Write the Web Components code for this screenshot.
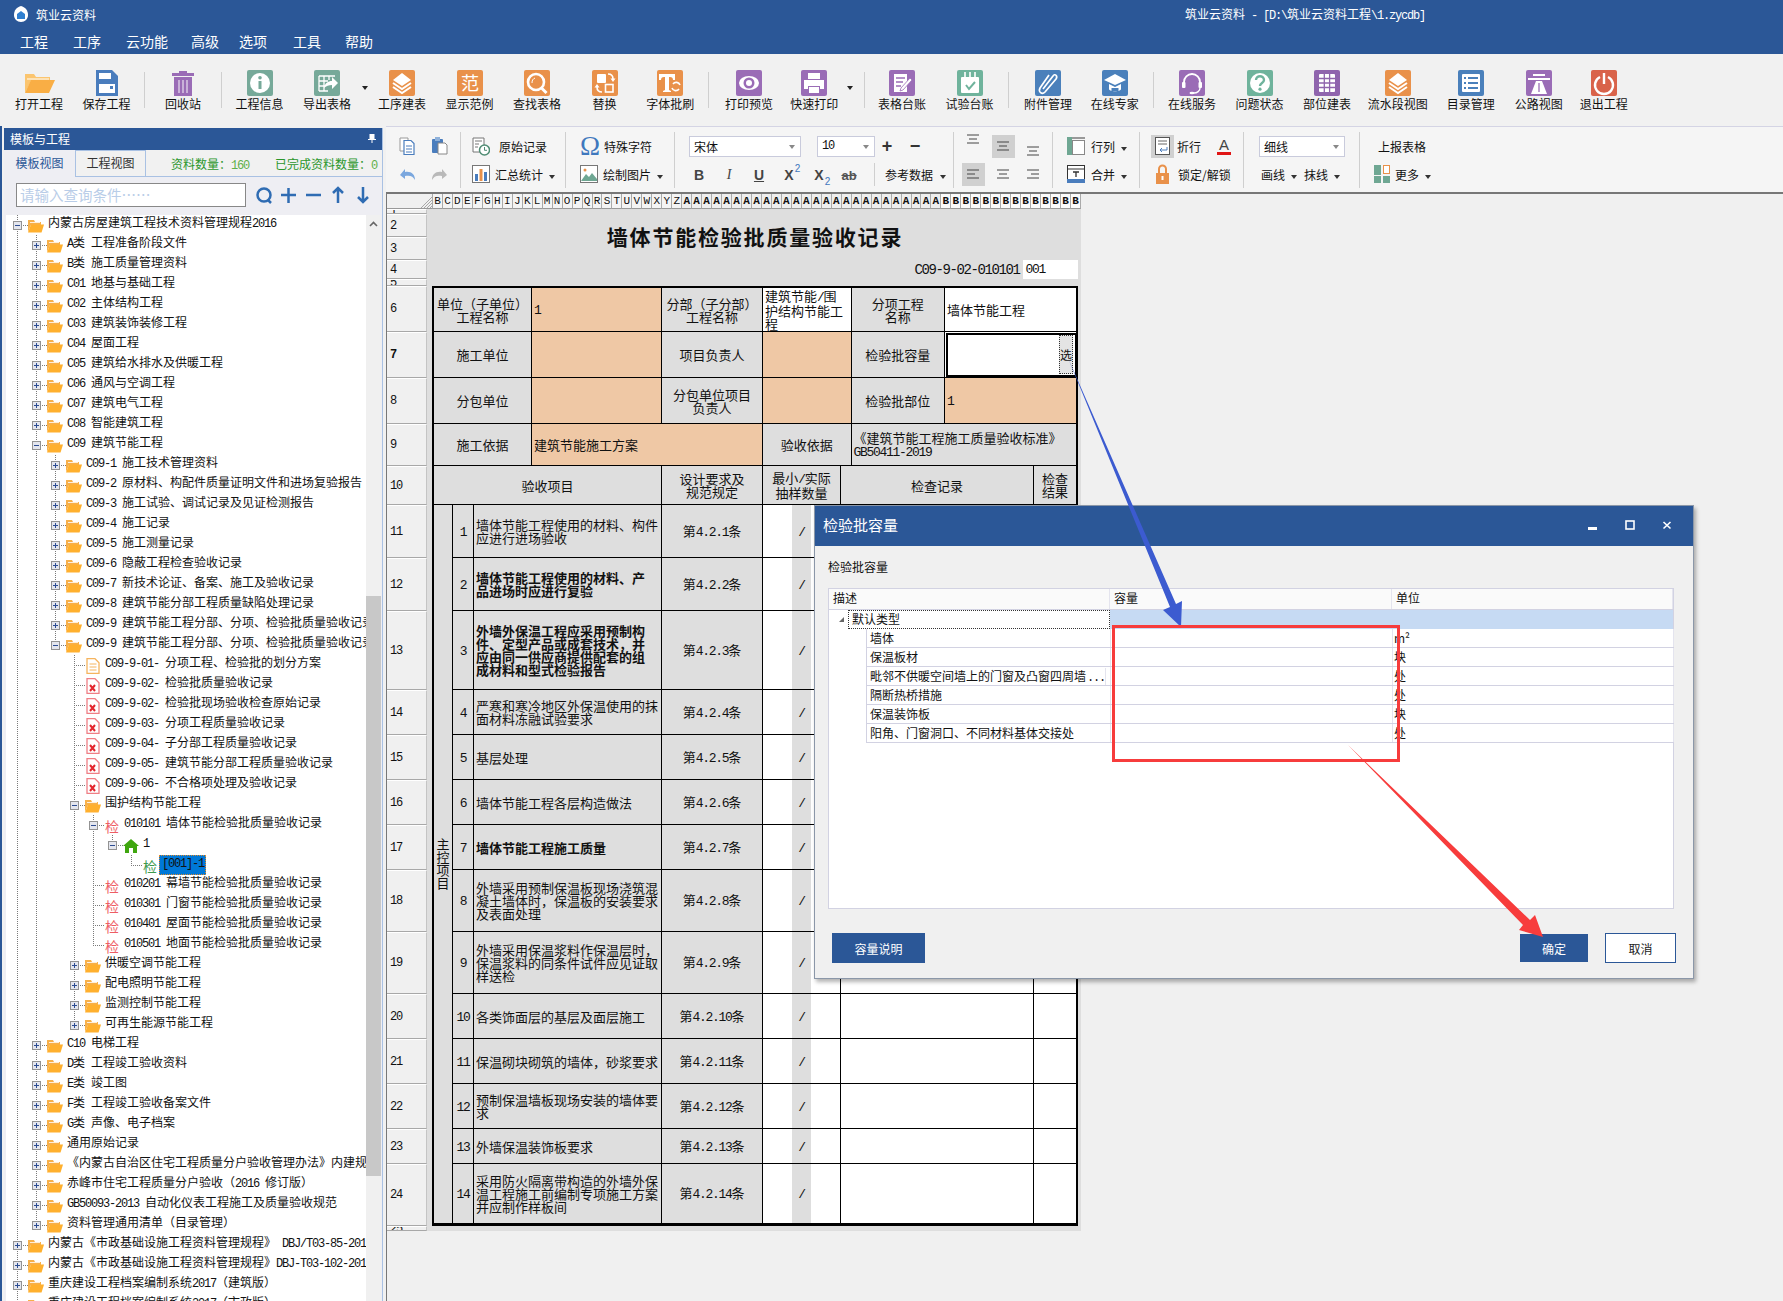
<!DOCTYPE html>
<html lang="zh">
<head>
<meta charset="utf-8">
<title>筑业云资料</title>
<style>
  html,body{margin:0;padding:0;background:#f0f0f0;overflow:hidden}
  body{font-family:"Noto Sans CJK SC","Liberation Sans",sans-serif;font-size:12px;color:#111}
</style>
</head>
<body>
<app-window></app-window>
<script>
const BLUE = "#2b5797";
const BASE = `*{box-sizing:border-box}.l{font-family:"Liberation Mono",monospace;letter-spacing:-.1em}`;
// half width latin like the SimSun of the original
const txt = s => s.replace(/[\x20-\x7e]+/g, m => `<span class="l">${m}</span>`);
const tile = (c, inner) => `<svg width="26" height="26" viewBox="0 0 26 26"><rect width="26" height="26" rx="2" fill="${c}"/>${inner}</svg>`;
const layers = `<path d="M13 3l9 7-9 6-9-6z" fill="#fff"/><path d="M4 13l9 6 9-6M4 17l9 6 9-6" fill="none" stroke="#fff" stroke-width="2"/>`;

class TitleBar extends HTMLElement {
  constructor() { super(); this.attachShadow({ mode: "open" }); }
  connectedCallback() {
    const menu = [["工程",0],["工序",25],["云功能",25],["高级",23],["选项",20],["工具",26],["帮助",24]];
    this.shadowRoot.innerHTML = `<style>${BASE}${TitleBar.styles}</style>
      <div class="top">
        <svg width="14" height="16" viewBox="0 0 14 16"><path d="M7 0C3 1 0 4 0 9c0 4 3 7 7 7s7-3 7-7c0-5-3-8-7-9z" fill="#fff"/><path d="M7 5l4 3v5H3V8z" fill="#2f7fd0"/></svg>
        <span class="app">筑业云资料</span>
        <span class="doc">${txt("筑业云资料 - [D:\\筑业云资料工程\\1.zycdb]")}</span>
      </div>
      <nav>${menu.map(m => `<span style="margin-left:${m[1]}px">${m[0]}</span>`).join("")}</nav>`;
  }
  static get styles() {
    return `:host{display:block;height:54px;background:${BLUE};color:#fff}
      .top{height:28px;display:flex;align-items:center;padding-left:14px}
      .app{margin-left:8px}
      .doc{margin-left:1089px}
      nav{display:flex;padding-left:20px;margin-top:1px;font-size:14px;line-height:24px}`;
  }
}
customElements.define("title-bar", TitleBar);

class RibbonBtn extends HTMLElement {
  constructor() { super(); this.attachShadow({ mode: "open" }); }
  connectedCallback() {
    this.style.width = (this.getAttribute("w") || 67.5) + "px";
    this.shadowRoot.innerHTML = `<style>${BASE}
      :host{display:flex;flex-direction:column;align-items:center;flex:none}
      .ic{height:26px;display:flex;align-items:center}
      .lb{margin-top:2px;line-height:12px;white-space:nowrap}
    </style><div class="ic"><slot></slot></div><div class="lb">${this.getAttribute("label")}</div>`;
  }
}
customElements.define("ribbon-btn", RibbonBtn);

class AppRibbon extends HTMLElement {
  constructor() { super(); this.attachShadow({ mode: "open" }); }
  connectedCallback() {
    const G = "#76a999", O = "#e9914a", P = "#9a6cb6", B = "#4a80bb", T = "#6fb39c";
    const sep = w => `<i class="sep" style="width:${w}px"></i>`;
    const dd = w => `<i class="dd" style="width:${w}px"></i>`;
    const btn = (label, icon, w) => `<ribbon-btn label="${label}"${w ? ` w="${w}"` : ""}>${icon}</ribbon-btn>`;
    this.shadowRoot.innerHTML = `<style>${BASE}${AppRibbon.styles}</style>
      ${btn("打开工程", `<svg width="31" height="22" viewBox="0 0 31 22"><path d="M1 21V2h9l2 3h14v4H7z" fill="#fbc56f"/><path d="M3 7h22" stroke="#fff" stroke-width="1"/><path d="M1 21 7 8h24l-6 13z" fill="#f9ae45"/></svg>`)}
      ${btn("保存工程", `<svg width="24" height="26" viewBox="0 0 24 26"><path d="M1 0h16l6 6v20H1z" fill="#4a7dbd"/><rect x="4" y="3" width="12" height="6" fill="#fff" /><rect x="4" y="14" width="16" height="9" fill="#fff"/><rect x="15" y="16" width="3" height="3" fill="#4a7dbd"/></svg>`)}
      ${sep(9)}
      ${btn("回收站", `<svg width="26" height="26" viewBox="0 0 26 26"><path d="M9 3V1h8v2h7v3H2V3z" fill="#9a6cb6"/><path d="M4 7h18v19H4z" fill="#9a6cb6"/><path d="M9 10v13M13 10v13M17 10v13" stroke="#d9c7e4" stroke-width="1.5"/></svg>`)}
      ${sep(9)}
      ${btn("工程信息", tile(G, `<circle cx="13" cy="13" r="10" fill="#fff"/><rect x="11.5" y="11" width="3" height="8" fill="${G}"/><circle cx="13" cy="7.8" r="1.8" fill="${G}"/>`))}
      ${btn("导出表格", tile(G, `<path d="M5 6h16M5 11h9M5 16h6M5 21h9M5 6v15M10 6v15M15 6v4" stroke="#fff" stroke-width="1.3" fill="none"/><path d="M10 18c1-5 4-7 8-7V7l6 6-6 6v-4c-3 0-6 1-8 3z" fill="#fff"/>`))}
      ${dd(7.5)}
      ${btn("工序建表", tile(O, layers))}
      ${btn("显示范例", tile(O, `<text x="13" y="20" text-anchor="middle" font-size="18" fill="#fff">范</text>`))}
      ${btn("查找表格", tile(O, `<circle cx="12" cy="12" r="8" fill="none" stroke="#fff" stroke-width="2.6"/><path d="M17.5 18l5 5" stroke="#fff" stroke-width="3"/><path d="M8 13c0-3 1-4 3-5" stroke="#fff" fill="none"/>`))}
      ${btn("替换", tile(O, `<rect x="5" y="4" width="9" height="9" rx="1" fill="#fff"/><rect x="13.5" y="14.5" width="7.5" height="7.5" fill="none" stroke="#fff" stroke-width="1.6"/><path d="M16 4c3 0 5 2 5 5M10 22c-3 0-5-2-5-5" fill="none" stroke="#fff" stroke-width="1.6"/><path d="M18.5 8.5h5L21 12zM2.5 17.5h5L5 14z" fill="#fff"/>`))}
      ${btn("字体批刷", tile(O, `<path d="M2 4h16v6h-2c0-2-1-3-3-3h-1v13l2 1v1H6v-1l2-1V7H7c-2 0-3 1-3 3H2z" fill="#fff"/><path d="M23 15a4 4 0 0 0-7-1M15 18a4 4 0 0 0 7 1" fill="none" stroke="#fff" stroke-width="1.6"/>`), 64)}
      ${sep(13)}
      ${btn("打印预览", tile(P, `<ellipse cx="13" cy="13" rx="10" ry="7" fill="#fff"/><circle cx="13" cy="13" r="5.5" fill="${P}"/><circle cx="13" cy="13" r="3" fill="#fff"/>`))}
      ${btn("快速打印", tile(P, `<rect x="7" y="3" width="12" height="6" fill="#fff"/><path d="M3 10h20v9h-4v-3H7v3H3z" fill="#fff"/><rect x="8" y="17" width="10" height="6" fill="#fff"/>`), 63)}
      ${dd(15)}${sep(7.5)}
      ${btn("表格台账", tile(P, `<path d="M5 4h13v18H5z" fill="#fff"/><path d="M7 8h9M7 12h7M7 16h5" stroke="${P}" stroke-width="1.4"/><path d="M12 18l9-10 2 2-9 10-3 1z" fill="#fff" stroke="${P}" stroke-width=".8"/>`))}
      ${btn("试验台账", tile(T, `<rect x="4" y="7" width="18" height="16" rx="1" fill="#fff"/><path d="M8 2v9M13 2v9M18 2v9" stroke="#fff" stroke-width="1.6"/><path d="M9 15l3 4 6-7" fill="none" stroke="${T}" stroke-width="2"/>`))}
      ${sep(11)}
      ${btn("附件管理", tile(B, `<path d="M9 20 19 7c2-3 5 0 3 3L11 23c-3 3-7 0-5-4L15 6" transform="translate(-1 -1)" fill="none" stroke="#fff" stroke-width="1.7"/>`))}
      ${btn("在线专家", tile(B, `<path d="M13 4l11 6-11 5-11-5z" fill="#fff"/><path d="M7 14v5c0 3 12 3 12 0v-5l-6 3z" fill="#fff"/><rect x="9.5" y="18" width="7" height="3" fill="${B}"/>`), 66)}
      ${sep(10.5)}
      ${btn("在线服务", tile(P, `<path d="M5 15v-3a8 8 0 0 1 16 0v3" fill="none" stroke="#fff" stroke-width="1.8"/><rect x="3" y="12" width="3.5" height="6" rx="1" fill="#fff"/><rect x="19.5" y="12" width="3.5" height="6" rx="1" fill="#fff"/><path d="M21 18c0 3-3 5-6 5" fill="none" stroke="#fff" stroke-width="1.4"/><ellipse cx="13" cy="23" rx="2.5" ry="1.3" fill="#fff"/>`))}
      ${btn("问题状态", tile(T, `<circle cx="13" cy="13" r="10" fill="#fff"/><path d="M9 10c0-5 8-5 8 0 0 3-4 3-4 6" fill="none" stroke="${T}" stroke-width="2.4"/><circle cx="13" cy="19.2" r="1.6" fill="${T}"/>`))}
      ${btn("部位建表", tile("#8f64ad", `<rect x="5" y="4" width="16" height="18" rx="1" fill="#fff"/><path d="M5 8.5h16M5 13h16M5 17.500h16M10.300 4v18M15.600 4v18" stroke="#8f64ad" stroke-width="1.300"/>`))}
      ${btn("流水段视图", tile(O, layers), 74)}
      ${btn("目录管理", tile(B, `<rect x="4" y="4" width="18" height="18" rx="1" fill="#fff"/><path d="M10 8h10M10 13h10M10 18h10M6 8h2M6 13h2M6 18h2" stroke="${B}" stroke-width="1.800"/>`), 72)}
      ${btn("公路视图", tile(P, `<path d="M2 8h22v2H2zM7 4h12v2H7z" fill="#fff"/><path d="M10 11h6l5 13H5z" fill="#fff"/><path d="M13 13v9" stroke="${P}" stroke-width="1.300"/>`), 64)}
      ${btn("退出工程", tile("#d9634a", `<path d="M9 7a9 9 0 1 0 8 0" fill="none" stroke="#fff" stroke-width="2.400"/><path d="M13 3v11" stroke="#fff" stroke-width="2.400"/>`), 66)}`;
  }
  static get styles() {
    return `:host{display:flex;height:72px;padding:16px 0 0 5.25px;background:#f1f1f1;align-items:flex-start}
      .sep{flex:none;height:36px;margin-top:2px;position:relative;background:linear-gradient(#cfcfcf,#cfcfcf) center/1px 100% no-repeat}
      .dd{flex:none;height:34px;background:linear-gradient(#f1f1f1,#f1f1f1);position:relative}
      .dd::after{content:"";position:absolute;left:1px;top:16px;border:3px solid transparent;border-top:4px solid #222}`;
  }
}
customElements.define("app-ribbon", AppRibbon);

class ProjectTree extends HTMLElement {
  constructor() { super(); this.attachShadow({ mode: "open" }); }
  static get rows() {
    // level | kind (o open, c closed, d doc, x red doc, ...) | text
    return `0|o|内蒙古房屋建筑工程技术资料管理规程2016
1|c|A类 工程准备阶段文件
1|c|B类 施工质量管理资料
1|c|C01 地基与基础工程
1|c|C02 主体结构工程
1|c|C03 建筑装饰装修工程
1|c|C04 屋面工程
1|c|C05 建筑给水排水及供暖工程
1|c|C06 通风与空调工程
1|c|C07 建筑电气工程
1|c|C08 智能建筑工程
1|o|C09 建筑节能工程
2|c|C09-1 施工技术管理资料
2|c|C09-2 原材料、构配件质量证明文件和进场复验报告
2|c|C09-3 施工试验、调试记录及见证检测报告
2|c|C09-4 施工记录
2|c|C09-5 施工测量记录
2|c|C09-6 隐蔽工程检查验收记录
2|c|C09-7 新技术论证、备案、施工及验收记录
2|c|C09-8 建筑节能分部工程质量缺陷处理记录
2|c|C09-9 建筑节能工程分部、分项、检验批质量验收记录
2|o|C09-9 建筑节能工程分部、分项、检验批质量验收记录
3|d|C09-9-01- 分项工程、检验批的划分方案
3|x|C09-9-02- 检验批质量验收记录
3|x|C09-9-02- 检验批现场验收检查原始记录
3|x|C09-9-03- 分项工程质量验收记录
3|x|C09-9-04- 子分部工程质量验收记录
3|x|C09-9-05- 建筑节能分部工程质量验收记录
3|x|C09-9-06- 不合格项处理及验收记录
3|o|围护结构节能工程
4|jo|010101 墙体节能检验批质量验收记录
5|h|1
6|g|[001]-1
4|j|010201 幕墙节能检验批质量验收记录
4|j|010301 门窗节能检验批质量验收记录
4|j|010401 屋面节能检验批质量验收记录
4|j|010501 地面节能检验批质量验收记录
3|c|供暖空调节能工程
3|c|配电照明节能工程
3|c|监测控制节能工程
3|c|可再生能源节能工程
1|c|C10 电梯工程
1|c|D类 工程竣工验收资料
1|c|E类 竣工图
1|c|F类 工程竣工验收备案文件
1|c|G类 声像、电子档案
1|c|通用原始记录
1|c|《内蒙古自治区住宅工程质量分户验收管理办法》内建规
1|c|赤峰市住宅工程质量分户验收（2016 修订版）
1|c|GB50093-2013 自动化仪表工程施工及质量验收规范
1|c|资料管理通用清单（目录管理）
0|c|内蒙古《市政基础设施工程资料管理规程》 DBJ/T03-85-201
0|c|内蒙古《市政基础设施工程资料管理规程》DBJ-T03-102-201
0|c|重庆建设工程档案编制系统2017（建筑版）
0|c|重庆建设工程档案编制系统2017（市政版）`.split("\n").map(r => { const p = r.split("|"); return { lv: +p[0], k: p[1], t: p[2] }; });
  }
  connectedCallback() {
    const rows = ProjectTree.rows;
    const folder = `<svg width="16" height="14" viewBox="0 0 16 14"><path d="M0 13V1h6l1 2h6v3H3z" fill="#f7b04a"/><path d="M2 3.500h10" stroke="#fff" stroke-width=".8"/><path d="M0 13.500 3 5.500h13l-2.500 8z" fill="#ffb02e"/></svg>`;
    const page = c => `<svg width="14" height="16" viewBox="0 0 14 16"><path d="M1 .7h8l4 4V15.300H1z" fill="#fff" stroke="${c}" stroke-width="1.300"/>`;
    const icons = {
      o: folder, c: folder,
      d: page("#f5b45e") + `<path d="M3.500 6h7M3.500 9h7M3.500 12h7" stroke="#f5b45e"/></svg>`,
      x: page("#ef7f86") + `<path d="M4 7l5 6M9 7l-5 6" stroke="#e3272f" stroke-width="2"/></svg>`,
      h: `<svg width="16" height="14" viewBox="0 0 16 14"><path d="M8 0l8 7h-2v7h-4V9H6v5H2V7H0z" fill="#3fa60f"/></svg>`
    };
    const nextSame = (i, l) => { // is there a later row at level l under the same parent?
      for (let j = i + 1; j < rows.length; j++) {
        if (rows[j].lv < l) return false;
        if (rows[j].lv === l) return true;
      }
      return false;
    };
    const dotV = `repeating-linear-gradient(to bottom,#7a7a7a 0 1px,transparent 1px 2px)`;
    const dotH = `repeating-linear-gradient(to right,#7a7a7a 0 1px,transparent 1px 2px)`;
    const html = rows.map((r, i) => {
      const bg = [];
      for (let l = 0; l < r.lv; l++) if (nextSame(i, l)) bg.push(`${dotV} ${11 + 19 * l}px 0/1px 100% no-repeat`);
      const x = 11 + 19 * r.lv;
      bg.push(nextSame(i, r.lv) ? `${dotV} ${x}px 0/1px 100% no-repeat` : `${dotV} ${x}px 0/1px 10px no-repeat`);
      bg.push(`${dotH} ${x}px 10px/11px 1px no-repeat`);
      const hasBox = "oc".includes(r.k) || r.k === "jo" || r.k === "h";
      const open = r.k === "o" || r.k === "jo" || r.k === "h";
      let ic;
      if (r.k === "j" || r.k === "jo") ic = `<b class="jian">检</b>`;
      else if (r.k === "g") ic = `<b class="jian g">检</b>`;
      else ic = icons[r.k];
      const label = r.k === "g" ? `<span class="t sel">${txt(r.t)}</span>` : `<span class="t">${txt(r.t)}</span>`;
      return `<div class="row" style="padding-left:${7 + 19 * r.lv}px;background:${bg.join(",")}">
        <i class="box ${hasBox ? (open ? "minus" : "plus") : "none"}"></i><span class="ic">${ic}</span>${label}</div>`;
    }).join("");
    this.shadowRoot.innerHTML = `<style>${BASE}${ProjectTree.styles}</style>${html}`;
  }
  static get styles() {
    return `:host{display:block;background:#fff;overflow:hidden;flex:1;min-width:0;height:100%}
      .row{height:20px;display:flex;align-items:center;white-space:nowrap}
      .box{flex:none;width:9px;height:9px;margin-right:6px;border:1px solid #939393;background:#e4e6ee;position:relative}
      .box.none{visibility:hidden}
      .box::before{content:"";position:absolute;left:1px;top:3px;width:5px;height:1px;background:#2c4c92}
      .box.plus::after{content:"";position:absolute;left:3px;top:1px;width:1px;height:5px;background:#2c4c92}
      .ic{flex:none;width:16px;height:16px;display:flex;align-items:center;justify-content:center;margin-top:1px;background:#fff}
      .jian{font-weight:400;font-size:14px;line-height:16px;color:#ee5d63}
      .jian.g{color:#3c9a4c}
      .t{margin:1px 0 0 4px;line-height:12px;align-self:flex-start}
      .t.sel{margin:0 0 0 1px;align-self:stretch;width:47px;background:#0078d7;outline:1px dotted #e08a2c;outline-offset:-1px;padding-left:3px;padding-top:1px}`;
  }
}
customElements.define("project-tree", ProjectTree);

class SidePanel extends HTMLElement {
  constructor() { super(); this.attachShadow({ mode: "open" }); }
  connectedCallback() {
    const c = "#2f6cb3";
    this.shadowRoot.innerHTML = `<style>${BASE}${SidePanel.styles}</style>
      <header><span>模板与工程</span>
        <svg width="8" height="9" viewBox="0 0 8 9"><path d="M1.500 0h5v5h1.500v1H4.500v3h-1V6H0V5h1.500z" fill="#fff"/></svg></header>
      <div class="tabs">
        <span class="tab on">模板视图</span><span class="tab">工程视图</span>
        <span class="st s1">资料数量：<em>${txt("160")}</em></span>
        <span class="st s2">已完成资料数量：<em>${txt("0")}</em></span>
      </div>
      <div class="search">
        <div class="box">请输入查询条件……</div>
        <svg width="126" height="20" viewBox="0 0 126 20" fill="none" stroke="${c}" stroke-width="2.500">
          <circle cx="9" cy="10" r="6.500"/><path d="M13 15l3 3"/>
          <path d="M26 10h15M33.500 3v15M51 10h15"/>
          <path d="M83 18V3M78 8l5-5 5 5M108 2v15M103 12l5 5 5-5"/>
        </svg>
      </div>
      <div class="body">
        <project-tree></project-tree>
        <div class="scroll">
          <svg class="up" width="9" height="6" viewBox="0 0 9 6"><path d="M1 5l3.500-3.500L8 5" fill="none" stroke="#666" stroke-width="1.600"/></svg>
          <div class="thumb"></div>
        </div>
      </div>`;
  }
  static get styles() {
    return `:host{display:flex;flex-direction:column;width:379px;margin:2px 0 0 2px;flex:none;height:1173px;background:#eeeef3;border-right:1px solid #a9c1e3}
      header{height:22px;background:${BLUE};color:#fff;display:flex;align-items:center;justify-content:space-between;padding:0 6px 2px 6px;flex:none}
      .tabs{height:27px;flex:none;display:flex;background:#f1f1f1;border-bottom:1px solid #a9c1e3;align-items:stretch;position:relative}
      .tab{width:71px;display:flex;align-items:center;justify-content:center;padding-bottom:3px;border:1px solid #a9c1e3;border-bottom:0;color:#333}
      .tab.on{color:${BLUE};width:71px;background:#eeeef3;border:0;margin-bottom:-1px;border-right:0}
      .st{color:#2b962b;align-self:center;padding-top:2px;white-space:nowrap}
      .st em{font-style:normal;color:#5fb04a}
      .s1{margin-left:25px}.s2{margin-left:26px}
      .search{height:38px;flex:none;display:flex;align-items:center;padding:0 0 2px 12px}
      .box{width:230px;height:24px;background:#fff;border:1px solid #888;color:#b9cde8;font-size:14.500px;line-height:22px;padding-left:3px;margin-right:9px;white-space:nowrap}
      .body{flex:1;display:flex;min-height:0;padding-left:2px}
      project-tree{width:360px;flex:none}
      .scroll{width:15px;flex:none;background:#f0f0f0;position:relative;padding-top:381px}
      .up{position:absolute;left:3px;top:6px}
      .thumb{height:580px;background:#c8c8c8}`;
  }
}
customElements.define("side-panel", SidePanel);

class EditToolbar extends HTMLElement {
  constructor() { super(); this.attachShadow({ mode: "open" }); }
  connectedCallback() {
    const dd = `<i class="dd"></i>`;
    const sel = (t, w) => `<span class="sel" style="width:${w}px">${txt(t)}<i></i></span>`;
    const al = (k, cls, dy) => {
      const a = { c: "M1 1h12M3 5h8M1 9h12", l: "M1 1h12M1 5h8M1 9h12", r: "M1 1h12M5 5h8M1 9h12" }[k];
      return `<span class="ab ${cls || ""}"><svg width="14" height="10" viewBox="0 0 14 10" style="transform:translateY(${dy || 0}px)"><path d="${a}" stroke="#444" fill="none"/></svg></span>`;
    };
    const s = (w, h, inner) => `<svg width="${w}" height="${h}" viewBox="0 0 ${w} ${h}">${inner}</svg>`;
    this.shadowRoot.innerHTML = `<style>${BASE}${EditToolbar.styles}</style>
    <div class="g" style="width:75px;padding-left:13px">
      <div class="r" style="gap:15px">
        ${s(17, 18, `<path d="M1 1h8v13H1z" fill="#fff" stroke="#999"/><path d="M5 3.500h7l3 3v11H5z" fill="#fff" stroke="#4a7dbd" stroke-width="1.200"/><path d="M7 9h6M7 12h6M7 15h6" stroke="#4a7dbd"/>`)}
        ${s(17, 18, `<rect x="1" y="2" width="11" height="14" rx="1" fill="#4a7dbd"/><rect x="4" y="0" width="5" height="4" fill="#8fb1da"/><path d="M7 6h7l2 2v9H7z" fill="#fff" stroke="#888"/>`)}
      </div>
      <div class="r" style="gap:15px">
        ${s(17, 14, `<path d="M1 8l5-6v3c6-1 10 2 10 8-2-4-5-5-10-4v3z" fill="#7aa7de"/>`)}
        ${s(17, 14, `<path d="M16 8l-5-6v3C5 4 1 7 1 13c2-4 5-5 10-4v3z" fill="#b9b9b9"/>`)}
      </div>
    </div>
    <div class="g" style="width:105px;padding-left:11px">
      <div class="r">${s(18, 19, `<path d="M1 1h11v14H1z" fill="#fff" stroke="#777"/><path d="M3 4h7M3 7h4M3 10h3" stroke="#777"/><circle cx="12.500" cy="13" r="5" fill="#fff" stroke="#4f8c73" stroke-width="1.500"/><path d="M12.500 10v3.300h2.500" stroke="#4f8c73" fill="none"/>`)}<span style="margin-left:9px">原始记录</span></div>
      <div class="r">${s(18, 18, `<rect x=".5" y=".5" width="17" height="17" fill="#fff" stroke="#777"/><rect x="3" y="9" width="3" height="7" fill="#4a7dbd"/><rect x="7.500" y="4" width="3" height="12" fill="#e9914a"/><rect x="12" y="7" width="3" height="9" fill="#4a7dbd"/>`)}<span style="margin-left:5px">汇总统计</span><span style="margin-left:6px">${dd}</span></div>
    </div>
    <div class="g" style="width:109px;padding-left:14px">
      <div class="r"><span class="om">Ω</span><span style="margin-left:6px">特殊字符</span></div>
      <div class="r">${s(18, 18, `<rect x=".5" y=".5" width="17" height="17" fill="#fff" stroke="#777"/><path d="M1 16l5-7 3 3 3-4 5 6v2H1z" fill="#6fa793"/><circle cx="5" cy="5" r="1.500" fill="#e9914a"/>`)}<span style="margin-left:5px">绘制图片</span><span style="margin-left:6px">${dd}</span></div>
    </div>
    <div class="g" style="width:279px;padding-left:14px">
      <div class="r">${sel("宋体", 112)}<span style="margin-left:16px">${sel("10", 58)}</span>
        <b class="pm" style="margin-left:5px">+</b><b class="pm" style="margin-left:14px">−</b></div>
      <div class="r" style="margin-left:-5px">
        <span class="f"><b style="font-family:'Liberation Sans';font-size:14px">B</b></span>
        <span class="f"><i style="font-family:'Liberation Serif';font-size:14px">I</i></span>
        <span class="f"><u style="font-family:'Liberation Sans';font-weight:700;font-size:14px">U</u></span>
        <span class="f"><b style="font-family:'Liberation Sans';font-size:14px">X</b><sup>2</sup></span>
        <span class="f"><b style="font-family:'Liberation Sans';font-size:14px">X</b><sub>2</sub></span>
        <span class="f"><s style="font-family:'Liberation Sans';font-size:13px;font-weight:700;color:#555">ab</s></span>
        <i class="mini" style="margin-left:10px"></i><span style="margin-left:10px;white-space:nowrap">参考数据</span><span style="margin-left:7px">${dd}</span>
      </div>
    </div>
    <div class="g" style="width:99px;padding-left:4px">
      <div class="r">${al("c", "", -7)}${al("c", "on", 0)}${al("c", "", 5)}</div>
      <div class="r">${al("l", "on")}${al("c")}${al("r")}</div>
    </div>
    <div class="g" style="width:87px;padding-left:14px">
      <div class="r">${s(18, 18, `<rect x="0" y="0" width="18" height="2" fill="#999"/><rect x="0" y="0" width="5" height="18" fill="#6fa793"/><rect x="5.500" y="3.500" width="12" height="14" fill="#fff" stroke="#888"/>`)}<span style="margin-left:6px">行列</span><span style="margin-left:6px">${dd}</span></div>
      <div class="r">${s(18, 18, `<rect x=".5" y=".5" width="17" height="17" fill="#fff" stroke="#333"/><rect x="0" y="14" width="18" height="4" fill="#4a7dbd"/><path d="M0 4h18" stroke="#333"/><path d="M6 7h6M9 7v5" stroke="#333" stroke-width="1.300"/>`)}<span style="margin-left:6px">合并</span><span style="margin-left:6px">${dd}</span></div>
    </div>
    <div class="g" style="width:104px;padding-left:11px">
      <div class="r"><span class="ab on" style="width:23px;margin-left:0">${s(15, 18, `<rect x=".5" y=".5" width="14" height="17" fill="#fff" stroke="#555"/><path d="M3 4h9M3 7h9" stroke="#666"/><path d="M12 10v3H5M7 11l-2 2 2 2" fill="none" stroke="#4a7dbd"/>`)}</span><span style="margin-left:3px">折行</span>
        <span class="a">A</span></div>
      <div class="r">${s(23, 20, `<path d="M8 9V5a3.500 3.500 0 0 1 7 0v4" fill="none" stroke="#e9914a" stroke-width="2"/><rect x="5" y="9" width="13" height="11" fill="#e9914a"/><rect x="10.500" y="12" width="2" height="4" fill="#fff"/>`)}<span style="margin-left:4px;white-space:nowrap">锁定/解锁</span></div>
    </div>
    <div class="g" style="width:116px;padding-left:15px">
      <div class="r">${sel("细线", 86)}</div>
      <div class="r"><span style="margin-left:2px">画线</span><span style="margin-left:6px">${dd}</span><span style="margin-left:7px">抹线</span><span style="margin-left:6px">${dd}</span></div>
    </div>
    <div class="g" style="border:0;padding-left:14px">
      <div class="r"><span style="margin-left:4px">上报表格</span></div>
      <div class="r">${s(16, 18, `<rect x="0" y="0" width="7" height="10" fill="#6fa793"/><rect x="9.500" y=".5" width="6" height="8" fill="#fff" stroke="#e9914a"/><rect x="0" y="11" width="7" height="7" fill="#6fa793"/><rect x="9" y="11" width="7" height="7" fill="#6fa793"/>`)}<span style="margin-left:5px">更多</span><span style="margin-left:6px">${dd}</span></div>
    </div>`;
  }
  static get styles() {
    return `:host{display:flex;height:68px;padding-top:5px;background:#f5f5f5;border-top:1px solid #d4d4e4;border-bottom:2px solid #777;flex:none}
      .g{height:56px;flex:none;border-right:1px solid #cfcfcf}
      .r{height:28px;display:flex;align-items:center;white-space:nowrap}
      .dd{display:inline-block;border:3px solid transparent;border-top:4px solid #333;vertical-align:-2px}
      .om{font-family:"Liberation Serif",serif;font-size:27px;line-height:26px;color:#3f78bd;width:18px;text-align:center}
      .sel{display:flex;align-items:center;height:21px;background:#fff;border:1px solid #c9cbdc;padding-left:4px;position:relative;flex:none}
      .sel i{position:absolute;right:5px;top:8px;border:3.500px solid transparent;border-top:4px solid #888}
      .pm{width:14px;text-align:center;font:700 18px/20px "Liberation Sans",sans-serif;color:#333}
      .f{width:30px;text-align:center;color:#444;flex:none;position:relative}
      .f sup,.f sub{font:10px "Liberation Sans",sans-serif;color:#3f78bd;position:absolute;margin-left:1px}
      .f sup{top:-3px}.f sub{bottom:-4px}
      .mini{width:1px;height:23px;background:#cfcfcf;flex:none}
      .ab{width:30px;height:23px;flex:none;display:flex;align-items:center;justify-content:center}
      .ab.on{background:linear-gradient(#d0d0d0,#d0d0d0) center/23px 23px no-repeat}
      .a{margin-left:16px;width:14px;text-align:center;font:15px/15px "Liberation Sans",sans-serif;color:#444;border-bottom:3px solid #e01515;padding-bottom:0}`;
  }
}
customElements.define("edit-toolbar", EditToolbar);

class ColHead extends HTMLElement {
  constructor() { super(); this.attachShadow({ mode: "open" }); }
  connectedCallback() {
    let h = "";
    for (let i = 1; i < 26; i++) h += `<span>${String.fromCharCode(65 + i)}</span>`;
    for (let i = 0; i < 26; i++) h += `<span class="a">A</span>`;
    for (let i = 0; i < 14; i++) h += `<span class="b">B</span>`;
    this.shadowRoot.innerHTML = `<style>${BASE}
      :host{display:flex;height:15px;flex:none;background:#f0f0f0;border-left:1px solid #777}
      .corner{width:46px;flex:none;border-right:1px solid #aaa;border-bottom:1px solid #999;display:flex;justify-content:flex-end;align-items:flex-end}
      span{width:9.97px;flex:none;text-align:center;font:11px/14px "Liberation Mono",monospace;border-right:1px solid #aaa;border-bottom:1px solid #999;background:#f4f4f4;overflow:hidden}
      .a{font-weight:700;background:#eee}.b{font-weight:700;background:#fbfbfb}
    </style><div class="corner"><svg width="11" height="11" viewBox="0 0 11 11"><path d="M11 0 0 11M11 3l-8 8M11 6l-5 5M11 9l-2 2" stroke="#a8a8a8"/></svg></div>${h}`;
  }
}
customElements.define("col-head", ColHead);

class SheetGrid extends HTMLElement {
  constructor() { super(); this.attachShadow({ mode: "open" }); }
  connectedCallback() {
    const heights = [5,23,23,19,7,46,46,46,42,39,53,53,79,45,45,45,45,62,62,45,45,45,35,62,5];
    // column lines of the sheet, table starts on line 3
    const L = [3,4,5,6,7,8,9,10,11,12,13,14,15,16];
    let h = "";
    heights.forEach((ht, i) => {
      h += `<div class="rh${i === 6 ? " bold" : ""}" style="grid-row:${i + 1};grid-column:1">${txt(String(i + 1))}</div>`;
    });
    const cell = (row, span, a, b, text, cls) => {
      let c = cls || "";
      if (L[a] === 3) c += " ol";
      if (b === 13) c += " or";
      if (row === 6) c += " ot";
      if (row + span - 1 === 24) c += " ob";
      h += `<div class="c ${c}" style="grid-row:${row}/span ${span};grid-column:${L[a]}/${L[b]}"><span>${txt(text)}</span></div>`;
    };
    // line index: 0=432 1=453 2=474 3=532 4=662 5=763 6=792 7=811 8=841 9=851 10=945 11=1022 12=1034 13=1078
    h += `<div class="title" style="grid-row:2/span 2;grid-column:3/16">墙体节能检验批质量验收记录</div>`;
    h += `<div class="code" style="grid-row:4;grid-column:13/14;justify-self:end;white-space:nowrap">${txt("C09-9-02-010101")}</div>`;
    h += `<div class="no" style="grid-row:4;grid-column:14/16">${txt("001")}</div>`;
    cell(6, 1, 0, 3, "单位（子单位）\n工程名称");
    cell(6, 1, 3, 4, "1", "p le");
    cell(6, 1, 4, 5, "分部（子分部）\n工程名称");
    cell(6, 1, 5, 9, "建筑节能/围\n护结构节能工\n程", "w le");
    cell(6, 1, 9, 10, "分项工程\n名称");
    cell(6, 1, 10, 13, "墙体节能工程", "w le");
    cell(7, 1, 0, 3, "施工单位");
    cell(7, 1, 3, 4, "", "p");
    cell(7, 1, 4, 5, "项目负责人");
    cell(7, 1, 5, 9, "", "p");
    cell(7, 1, 9, 10, "检验批容量");
    h += `<div class="c w or pick" style="grid-row:7;grid-column:13/16"><i>选</i></div>`;
    cell(8, 1, 0, 3, "分包单位");
    cell(8, 1, 3, 4, "", "p");
    cell(8, 1, 4, 5, "分包单位项目\n负责人");
    cell(8, 1, 5, 9, "", "p");
    cell(8, 1, 9, 10, "检验批部位");
    cell(8, 1, 10, 13, "1", "p le");
    cell(9, 1, 0, 3, "施工依据");
    cell(9, 1, 3, 5, "建筑节能施工方案", "p le");
    cell(9, 1, 5, 9, "验收依据");
    cell(9, 1, 9, 13, "《建筑节能工程施工质量验收标准》\nGB50411-2019", "le");
    cell(10, 1, 0, 4, "验收项目");
    cell(10, 1, 4, 5, "设计要求及\n规范规定");
    cell(10, 1, 5, 8, "最小/实际\n抽样数量");
    cell(10, 1, 8, 12, "检查记录");
    cell(10, 1, 12, 13, "检查\n结果");
    cell(11, 14, 0, 1, "主控项目", "vert");
    const items = [
      "墙体节能工程使用的材料、构件\n应进行进场验收",
      "*墙体节能工程使用的材料、产\n品进场时应进行复验",
      "*外墙外保温工程应采用预制构\n件、定型产品或成套技术，并\n应由同一供应商提供配套的组\n成材料和型式检验报告",
      "严寒和寒冷地区外保温使用的抹\n面材料冻融试验要求",
      "基层处理",
      "墙体节能工程各层构造做法",
      "*墙体节能工程施工质量",
      "外墙采用预制保温板现场浇筑混\n凝土墙体时，保温板的安装要求\n及表面处理",
      "外墙采用保温浆料作保温层时，\n保温浆料的同条件试件应见证取\n样送检",
      "各类饰面层的基层及面层施工",
      "保温砌块砌筑的墙体，砂浆要求",
      "预制保温墙板现场安装的墙体要\n求",
      "外墙保温装饰板要求",
      "采用防火隔离带构造的外墙外保\n温工程施工前编制专项施工方案\n并应制作样板间"
    ];
    items.forEach((t, i) => {
      const row = 11 + i, bold = t[0] === "*";
      cell(row, 1, 1, 2, String(i + 1));
      cell(row, 1, 2, 4, bold ? t.slice(1) : t, bold ? "le bd" : "le");
      cell(row, 1, 4, 5, `第4.2.${i + 1}条`);
      cell(row, 1, 5, 6, "", "w nr");
      cell(row, 1, 6, 7, "/", "nr");
      cell(row, 1, 7, 8, "", "w");
      cell(row, 1, 8, 12, "", "w");
      cell(row, 1, 12, 13, "", "w");
    });
    this.shadowRoot.innerHTML = `<style>${BASE}${SheetGrid.styles}</style>${h}`;
    this.style.gridTemplateRows = heights.map(x => x + "px").join(" ");
  }
  static get styles() {
    return `:host{display:grid;width:695px;flex:none;background:#dedede;border-left:1px solid #777;
        grid-template-columns:40px 5px 21px 21px 58px 130px 101px 29px 19px 30px 10.5px 93.5px 77.5px 11.5px 44px 3px}
      .rh{background:#f0f0f0;border-top:1px solid #fff;border-bottom:1px solid #a8a8a8;border-right:1px solid #c4c4c4;padding-left:3px;display:flex;align-items:center;overflow:hidden;line-height:12px}
      .rh.bold{font-weight:700}
      .c{background:#dedede;border-right:1px solid #000;border-bottom:1px solid #000;display:flex;align-items:center;justify-content:center;text-align:center;font-size:13px;line-height:13px;white-space:pre-line;overflow:hidden;min-width:0;color:#111}
      .le{justify-content:flex-start;text-align:left;padding-left:2px}
      .p{background:#efc8a5}.w{background:#fff}
      .bd{font-weight:700}
      .nr{border-right:0}
      .ol{border-left:2px solid #000}.or{border-right:2px solid #000}.ot{border-top:2px solid #000}.ob{border-bottom:3px solid #000}
      .vert{writing-mode:vertical-rl;text-orientation:upright;letter-spacing:0}
      .title{display:flex;align-items:center;justify-content:center;font-weight:700;font-size:21px;line-height:24px;letter-spacing:1.8px;color:#111;padding-bottom:3px}
      .code{display:flex;align-items:center;font-size:14px;line-height:16px;padding-right:3px}
      .no{background:#fff;display:flex;align-items:center;padding-left:3px;font-size:13px;line-height:16px}
      .pick{justify-content:flex-end;outline:2px solid #000;outline-offset:-3px;padding-right:3px;align-items:stretch;padding-top:3px;padding-bottom:3px}
      .pick i{font-style:normal;width:14px;background:#e4e4e4;border:1px dotted #333;display:flex;align-items:center;justify-content:center;font-size:12px}`;
  }
}
customElements.define("sheet-grid", SheetGrid);

class WorkArea extends HTMLElement {
  constructor() { super(); this.attachShadow({ mode: "open" }); }
  connectedCallback() {
    this.shadowRoot.innerHTML = `<style>${BASE}
      :host{display:flex;flex-direction:column;flex:1;min-width:0;margin-left:3px;background:#f0f0f0}
      .fill{flex:1;border-left:1px solid #777}
    </style><edit-toolbar></edit-toolbar><col-head></col-head><sheet-grid></sheet-grid><div class="fill"></div>`;
  }
}
customElements.define("work-area", WorkArea);

class AppDialog extends HTMLElement {
  constructor() { super(); this.attachShadow({ mode: "open" }); }
  connectedCallback() {
    const rows = [["墙体","m²"],["保温板材","块"],["毗邻不供暖空间墙上的门窗及凸窗四周墙...","处"],["隔断热桥措施","处"],["保温装饰板","块"],["阳角、门窗洞口、不同材料基体交接处","处"]];
    const cap = this.getAttribute("caption");
    this.shadowRoot.innerHTML = `<style>${BASE}${AppDialog.styles}</style>
      <header><span class="tt">${cap}</span>
        <span class="ctl">
          <svg width="10" height="10" viewBox="0 0 10 10"><rect x="0" y="7" width="9" height="3" fill="#fff"/></svg>
          <svg width="10" height="10" viewBox="0 0 10 10"><rect x="1" y="1" width="8" height="8" fill="none" stroke="#fff" stroke-width="1.600"/></svg>
          <svg width="10" height="10" viewBox="0 0 10 10"><path d="M1.500 2l7 6.500M8.500 2l-7 6.500" stroke="#fff" stroke-width="1.600"/></svg>
        </span></header>
      <div class="cap">${cap}</div>
      <div class="tbl">
        <div class="hd"><span>描述</span><span>容量</span><span>单位</span></div>
        <div class="grp"><span class="f"><i></i><b>默认类型</b></span><span></span><span></span></div>
        ${rows.map(r => `<div class="tr"><span>${txt(r[0])}</span><span></span><span>${r[1]}</span></div>`).join("")}
      </div>
      <div class="ft">
        <span class="btn pr" style="width:93px;height:30px">容量说明</span>
        <span class="btn pr" style="width:68px;height:28px;margin-left:595px">确定</span>
        <span class="btn" style="width:71px;height:30px;margin-left:17px">取消</span>
      </div>`;
  }
  static get styles() {
    return `:host{position:absolute;left:814px;top:505px;width:880px;height:474px;background:#f0f0f0;border:1px solid #8b97a8;box-shadow:2px 3px 4px rgba(0,0,0,.3);display:flex;flex-direction:column}
      header{height:40px;flex:none;background:${BLUE};color:#fff;display:flex;align-items:center;justify-content:space-between;padding:0 0 3px 8px}
      .tt{font-size:15px}
      .ctl{display:flex;gap:27px;margin-right:21px;align-items:center}
      .cap{height:42px;flex:none;padding:15px 0 0 13px;line-height:12px}
      .tbl{margin-left:13px;width:846px;height:321px;flex:none;background:#fff;border:1px solid #d2d2e2}
      .hd,.grp,.tr{display:grid;grid-template-columns:281px 282px 281px;line-height:12px}
      .hd{height:21px;background:#fafafa;border-bottom:1px solid #d2d2e2;align-items:stretch}
      .hd span{padding:3px 0 0 4px;border-right:1px solid #e4e4ee}
      .grp{height:19px;background:#c6daf3}
      .grp .f{background:#fff;display:flex;align-items:center;padding-left:10px}
      .grp i{width:0;height:0;border-left:5px solid transparent;border-bottom:5px solid #666}
      .grp b{font-weight:400;flex:1;height:19px;margin-left:4px;border:1px dotted #333;padding:2px 0 0 3px}
      .tr{height:19px;border-bottom:1px solid #d2d2e2;margin-left:37px;grid-template-columns:244px 282px 281px;border-left:1px solid #d2d2e2}
      .tr span{padding:3px 0 0 3px;border-right:1px solid #e4e4ee;white-space:nowrap;overflow:hidden}
      .tr span:last-child{padding-left:1px}
      .ft{display:flex;align-items:center;margin-top:24px;padding-left:17px}
      .btn{flex:none;display:flex;align-items:center;justify-content:center;background:#fff;border:1px solid ${BLUE};color:#222}
      .btn.pr{background:${BLUE};color:#fff}`;
  }
}
customElements.define("app-dialog", AppDialog);

class NoteArrows extends HTMLElement {
  constructor() { super(); this.attachShadow({ mode: "open" }); }
  connectedCallback() {
    this.shadowRoot.innerHTML = `<style>:host{position:absolute;left:0;top:0;pointer-events:none}svg{display:block}</style>
      <svg width="1783" height="1301" viewBox="0 0 1783 1301">
        <path d="M1068 358 1176 604l6-3-1 26-18-17 7-3z" fill="#3c5bd0"/>
        <path d="M1348 745 1530 920l5-5 8 22-24-7 4-5z" fill="#f73c3c"/>
        <rect x="1113.500" y="626.500" width="285" height="134" fill="none" stroke="#f73c3c" stroke-width="3"/>
      </svg>`;
  }
}
customElements.define("note-arrows", NoteArrows);

class AppWindow extends HTMLElement {
  constructor() { super(); this.attachShadow({ mode: "open" }); }
  connectedCallback() {
    this.shadowRoot.innerHTML = `<style>${BASE}
      :host{display:block;position:relative;width:1783px;height:1301px;overflow:hidden;background:#f1f1f1}
      .main{display:flex;height:1175px;border-left:2px solid ${BLUE}}
    </style>
    <title-bar></title-bar>
    <app-ribbon></app-ribbon>
    <div class="main"><side-panel></side-panel><work-area></work-area></div>
    <app-dialog caption="检验批容量"></app-dialog>
    <note-arrows></note-arrows>`;
  }
}
customElements.define("app-window", AppWindow);
</script>
</body>
</html>
